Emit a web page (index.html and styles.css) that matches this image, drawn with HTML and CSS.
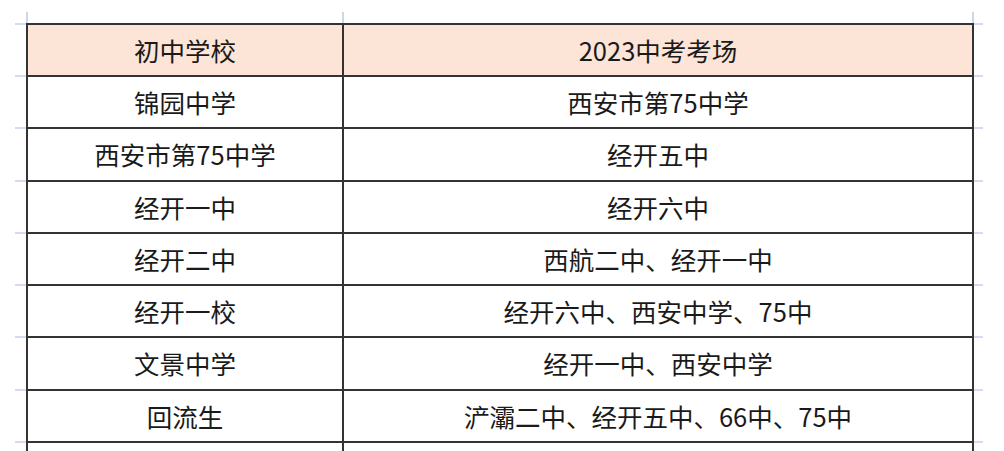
FILE: index.html
```html
<!DOCTYPE html>
<html lang="zh-CN">
<head>
<meta charset="utf-8">
<link rel="stylesheet" href="styles.css">
</head>
<body>
<div class="sheet">
  <div class="corner"></div>
  <div class="topstrip">
    <span class="vl"></span><span class="gap1"></span><span class="vl"></span><span class="gap2"></span><span class="vl"></span>
  </div>
  <div class="corner"></div>
  <div class="leftticks">
    <span class="tick"></span><span class="tick"></span><span class="tick"></span><span class="tick"></span><span class="tick"></span><span class="tick"></span><span class="tick"></span><span class="tick"></span><span class="tick"></span>
  </div>
  <div class="table">
    <div class="cell head">初中学校</div><div class="cell head">2023中考考场</div>
    <div class="cell">锦园中学</div><div class="cell">西安市第75中学</div>
    <div class="cell">西安市第75中学</div><div class="cell">经开五中</div>
    <div class="cell">经开一中</div><div class="cell">经开六中</div>
    <div class="cell">经开二中</div><div class="cell">西航二中、经开一中</div>
    <div class="cell">经开一校</div><div class="cell">经开六中、西安中学、75中</div>
    <div class="cell">文景中学</div><div class="cell">经开一中、西安中学</div>
    <div class="cell">回流生</div><div class="cell">浐灞二中、经开五中、66中、75中</div>
    <div class="cell"></div><div class="cell"></div>
  </div>
  <div class="rightticks">
    <span class="tick"></span><span class="tick"></span><span class="tick"></span><span class="tick"></span><span class="tick"></span><span class="tick"></span><span class="tick"></span><span class="tick"></span><span class="tick"></span>
  </div>
</div>
</body>
</html>
```
FILE: styles.css
```css
html, body {
  margin: 0;
  padding: 0;
  background: #ffffff;
  height: 451px;
  overflow: hidden;
}
.sheet {
  display: grid;
  grid-template-columns: 26px 948px 9px;
  grid-template-rows: 11px auto;
  padding-top: 12px;
}
.topstrip {
  display: flex;
  height: 11px;
}
.vl {
  width: 2px;
  height: 11px;
  background: #cdd6ea;
}
.gap1 { width: 314px; }
.gap2 { width: 628px; }
.leftticks, .rightticks {
  display: flex;
  flex-direction: column;
}
.leftticks { padding-left: 15px; }
.tick {
  display: block;
  height: 52.25px;
  box-sizing: border-box;
  border-top: 2px solid #d3dbee;
  flex: none;
}
.leftticks .tick:first-child, .rightticks .tick:first-child {
  height: 52px;
}
.table {
  display: grid;
  grid-template-columns: 316px 630px;
  grid-template-rows: 52px;
  grid-auto-rows: 52.25px;
  border-left: 2px solid #333333;
  border-top: 2px solid #333333;
}
.cell {
  box-sizing: border-box;
  border-right: 2px solid #333333;
  border-bottom: 2px solid #333333;
  display: flex;
  align-items: center;
  justify-content: center;
  font-family: "Noto Sans CJK SC", "Noto Sans", sans-serif;
  font-size: 25.5px;
  color: #1a1a1a;
  padding-bottom: 1px;
}
.head {
  background: #fce4d6;
}
```
